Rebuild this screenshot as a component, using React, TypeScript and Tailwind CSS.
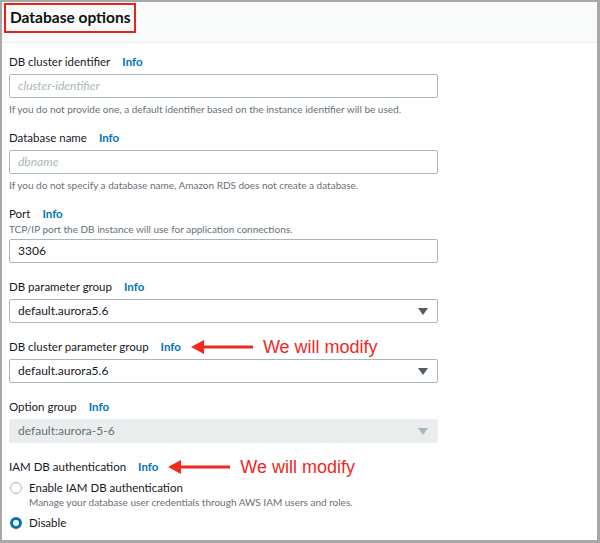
import React from "react";

const font = { fontFamily: "Lato, 'Open Sans', sans-serif" };

function Info() {
  return <span className="ml-[12px] font-bold text-[#0073bb]">Info</span>;
}

function Arrow() {
  return (
    <svg width="62" height="14" viewBox="0 0 62 14" className="block">
      <polygon points="0,7 13,0 13,14" fill="#f0281e" />
      <rect x="12" y="5.5" width="50" height="3" fill="#f0281e" />
    </svg>
  );
}

function Note() {
  return (
    <span className="ml-[10px] flex items-center">
      <Arrow />
      <span
        className="ml-[10px] whitespace-nowrap text-[18px] leading-none text-[#f0281e]"
        style={{ fontFamily: "'Liberation Sans', Arial, sans-serif" }}
      >
        We will modify
      </span>
    </span>
  );
}

function Label({ text, note }: { text: string; note?: boolean }) {
  return (
    <div className="flex h-[16px] items-center whitespace-nowrap text-[11.5px] text-[#16191f]">
      <span>{text}</span>
      <Info />
      {note && <Note />}
    </div>
  );
}

function Input({ value, placeholder }: { value?: string; placeholder?: string }) {
  return (
    <div className="mt-[4px] flex h-[24px] w-[429px] items-center rounded-[2px] border border-[#aab7b8] bg-white pl-[8px] text-[12px]">
      {value ? (
        <span className="text-[#16191f]">{value}</span>
      ) : (
        <span className="italic text-[#aab7b8]">{placeholder}</span>
      )}
    </div>
  );
}

function Select({ value, disabled }: { value: string; disabled?: boolean }) {
  return (
    <div
      className={
        disabled
          ? "mt-[4px] flex h-[24px] w-[429px] items-center justify-between rounded-[2px] border border-[#eaeded] bg-[#eaeded] pl-[8px] pr-[9px] text-[12px] text-[#687078]"
          : "mt-[4px] flex h-[24px] w-[429px] items-center justify-between rounded-[2px] border border-[#aab7b8] bg-white pl-[8px] pr-[9px] text-[12px] text-[#16191f]"
      }
    >
      <span>{value}</span>
      <svg width="10" height="7" viewBox="0 0 10 7">
        <polygon points="0,0 10,0 5,7" fill={disabled ? "#aab7b8" : "#545b64"} />
      </svg>
    </div>
  );
}

function Hint({ text, mt }: { text: string; mt: string }) {
  return <div className={`${mt} h-[12px] whitespace-nowrap text-[10px] leading-[12px] text-[#687078]`}>{text}</div>;
}

export default function App() {
  return (
    <div
      className="h-[543px] w-[600px] overflow-hidden border-2 border-r-[3px] border-b-[3px] border-[#a8a8a8] bg-white"
      style={font}
    >
      <div className="h-[41px] border-b border-[#eaeded] bg-[#f9fafa] pl-[2px] pt-[1px]">
        <div className="flex h-[30px] w-[132px] items-center whitespace-nowrap border-2 border-[#e8211a] pl-[4px] text-[15.5px] font-bold text-[#0f1111]">
          Database options
        </div>
      </div>
      <div className="pl-[7px] pt-[11px]">
        <Label text="DB cluster identifier" />
        <Input placeholder="cluster-identifier" />
        <Hint
          mt="mt-[5px]"
          text="If you do not provide one, a default identifier based on the instance identifier will be used."
        />

        <div className="mt-[15px]">
          <Label text="Database name" />
          <Input placeholder="dbname" />
          <Hint
            mt="mt-[5px]"
            text="If you do not specify a database name, Amazon RDS does not create a database."
          />
        </div>

        <div className="mt-[15px]">
          <Label text="Port" />
          <Hint mt="mt-[1px]" text="TCP/IP port the DB instance will use for application connections." />
          <Input value="3306" />
        </div>

        <div className="mt-[16px]">
          <Label text="DB parameter group" />
          <Select value="default.aurora5.6" />
        </div>

        <div className="mt-[16px]">
          <Label text="DB cluster parameter group" note />
          <Select value="default.aurora5.6" />
        </div>

        <div className="mt-[16px]">
          <Label text="Option group" />
          <Select value="default:aurora-5-6" disabled />
        </div>

        <div className="mt-[16px]">
          <Label text="IAM DB authentication" note />
          <div className="mt-[5px] flex h-[16px] items-center whitespace-nowrap text-[11.5px] text-[#16191f]">
            <span className="ml-[1px] h-[12px] w-[12px] rounded-full border border-[#aab7b8] bg-white" />
            <span className="ml-[7px]">Enable IAM DB authentication</span>
          </div>
          <div className="ml-[20px] h-[12px] whitespace-nowrap text-[10px] leading-[12px] text-[#687078]">
            Manage your database user credentials through AWS IAM users and roles.
          </div>
          <div className="mt-[7px] flex h-[16px] items-center text-[11.5px] text-[#16191f]">
            <span className="ml-[1px] h-[12px] w-[12px] rounded-full border-[3px] border-[#0073bb] bg-white" />
            <span className="ml-[7px]">Disable</span>
          </div>
        </div>
      </div>
    </div>
  );
}
